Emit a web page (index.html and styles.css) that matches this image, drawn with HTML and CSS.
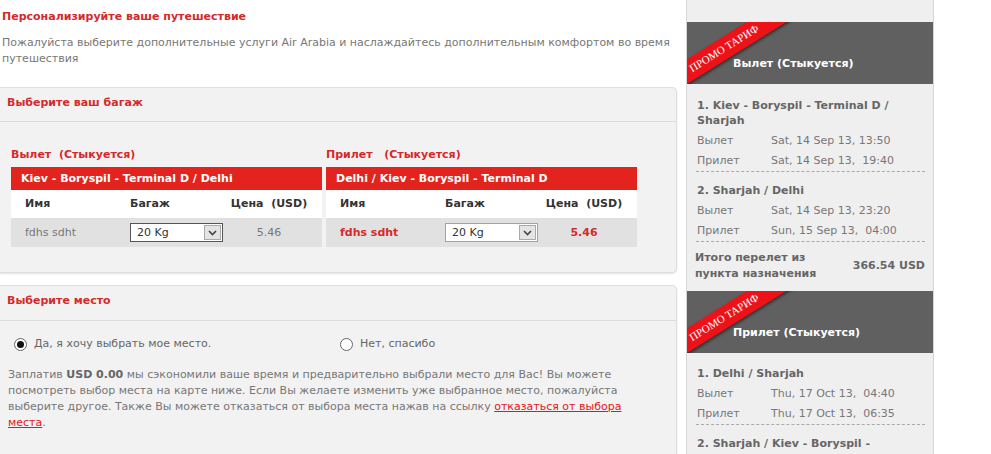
FILE: index.html
```html
<!DOCTYPE html>
<html lang="ru">
<head>
    <meta charset="utf-8">
    <title>Персонализируйте ваше путешествие</title>
    <link rel="stylesheet" href="styles.css">
</head>
<body>
<div class="page">
    <div class="main">
        <h2 class="title">Персонализируйте ваше путешествие</h2>
        <p class="intro">Пожалуйста выберите дополнительные услуги Air Arabia и наслаждайтесь дополнительным комфортом во время<br>путешествия</p>

        <!-- багаж -->
        <div class="panel">
            <div class="panel-head">Выберите ваш багаж</div>
            <div class="bag-body">
                <div class="legs">
                    <div class="leg">
                        <div class="leg-label">Вылет&nbsp; (Стыкуется)</div>
                        <div class="leg-route">Kiev - Boryspil - Terminal D / Delhi</div>
                        <div class="grid grid-head">
                            <span>Имя</span>
                            <span>Багаж</span>
                            <span class="price">Цена&nbsp; (USD)</span>
                        </div>
                        <div class="grid grid-row">
                            <span>fdhs sdht</span>
                            <span>
                                <span class="select">
                                    <span class="select-text">20 Kg</span>
                                    <span class="select-btn"><svg width="9" height="6" viewBox="0 0 9 6"><path d="M1 1 L4.5 4.5 L8 1" fill="none" stroke="#444" stroke-width="1.6"/></svg></span>
                                </span>
                            </span>
                            <span class="price">5.46</span>
                        </div>
                    </div>
                    <div class="leg">
                        <div class="leg-label">Прилет&nbsp;&nbsp; (Стыкуется)</div>
                        <div class="leg-route">Delhi / Kiev - Boryspil - Terminal D</div>
                        <div class="grid grid-head">
                            <span>Имя</span>
                            <span>Багаж</span>
                            <span class="price">Цена&nbsp; (USD)</span>
                        </div>
                        <div class="grid grid-row active">
                            <span>fdhs sdht</span>
                            <span>
                                <span class="select focus">
                                    <span class="select-text">20 Kg</span>
                                    <span class="select-btn"><svg width="9" height="6" viewBox="0 0 9 6"><path d="M1 1 L4.5 4.5 L8 1" fill="none" stroke="#444" stroke-width="1.6"/></svg></span>
                                </span>
                            </span>
                            <span class="price">5.46</span>
                        </div>
                    </div>
                </div>
            </div>
        </div>

        <!-- место -->
        <div class="panel panel-seat">
            <div class="panel-head">Выберите место</div>
            <div class="seat-body">
                <div class="radios">
                    <label class="option"><span class="radio checked"></span>Да, я хочу выбрать мое место.</label>
                    <label class="option"><span class="radio"></span>Нет, спасибо</label>
                </div>
                <p class="seat-text">Заплатив <b>USD 0.00</b> мы сэкономили ваше время и предварительно выбрали место для Вас! Вы можете<br>посмотреть выбор места на карте ниже. Если Вы желаете изменить уже выбранное место, пожалуйста<br>выберите другое. Также Вы можете отказаться от выбора места нажав на ссылку <a href="#">отказаться от выбора<br>места</a>.</p>
                <div class="seat-legs">
                    <span>Kiev - Boryspil / Sharjah</span>
                    <span>Sharjah / Delhi</span>
                </div>
            </div>
        </div>
    </div>

    <div class="side">
        <div class="side-top">
            <div class="row"><span class="row-label">Прилет</span><span>Thu, 12 Sep 13,&nbsp; 21:05</span></div>
        </div>

        <div class="side-head">
            <div class="ribbon">ПРОМО ТАРИФ</div>
            Вылет (Стыкуется)
        </div>
        <div class="seg seg-first">
            <div class="seg-title">1. Kiev - Boryspil - Terminal D / Sharjah</div>
            <div class="row"><span class="row-label">Вылет</span><span>Sat, 14 Sep 13, 13:50</span></div>
            <div class="row"><span class="row-label">Прилет</span><span>Sat, 14 Sep 13,&nbsp; 19:40</span></div>
        </div>
        <div class="seg">
            <div class="seg-title">2. Sharjah / Delhi</div>
            <div class="row"><span class="row-label">Вылет</span><span>Sat, 14 Sep 13, 23:20</span></div>
            <div class="row"><span class="row-label">Прилет</span><span>Sun, 15 Sep 13,&nbsp; 04:00</span></div>
        </div>
        <div class="total">
            <span>Итого перелет из<br>пункта назначения</span>
            <span>366.54 USD</span>
        </div>

        <div class="side-head">
            <div class="ribbon">ПРОМО ТАРИФ</div>
            Прилет (Стыкуется)
        </div>
        <div class="seg seg-second">
            <div class="seg-title">1. Delhi / Sharjah</div>
            <div class="row"><span class="row-label">Вылет</span><span>Thu, 17 Oct 13,&nbsp; 04:40</span></div>
            <div class="row"><span class="row-label">Прилет</span><span>Thu, 17 Oct 13,&nbsp; 06:35</span></div>
        </div>
        <div class="seg">
            <div class="seg-title">2. Sharjah / Kiev - Boryspil - Terminal D</div>
            <div class="row"><span class="row-label">Вылет</span><span>Thu, 17 Oct 13,&nbsp; 08:10</span></div>
        </div>
    </div>
</div>
</body>
</html>
```

FILE: styles.css
```css
body {
    margin: 0;
    font-family: "DejaVu Sans", Verdana, sans-serif;
    font-size: 11px;
    line-height: 16px;
    color: #777;
    background-color: #fff;
    overflow: hidden;
}

.page {
    display: flex;
    align-items: flex-start;
    gap: 9px;
}

.main {
    flex: none;
    width: 677px;
}

.title {
    margin: 9px 0 0 2px;
    font-size: 11px;
    line-height: 16px;
    color: #d52a2c;
}

.intro {
    margin: 10px 0 0 2px;
    color: #777;
}

.panel {
    margin-top: 20px;
    background-color: #f2f2f2;
    border: 1px solid #dedede;
    border-left: 0;
    border-radius: 0 5px 5px 0;
    box-shadow: 0 1px 2px rgba(0, 0, 0, 0.12);
}

.panel-seat {
    margin-top: 12px;
}

.panel-head {
    padding: 7px 7px 10px;
    border-bottom: 1px solid #dcdcdc;
    font-weight: bold;
    color: #d52a2c;
}

.panel-seat .panel-head {
    padding-bottom: 11px;
}

.bag-body {
    padding: 25px 11px 25px;
}

.legs {
    display: flex;
    gap: 4px;
}

.leg {
    width: 311px;
}

.leg-label {
    margin-bottom: 4px;
    font-weight: bold;
    color: #d52a2c;
}

.leg-route {
    padding-left: 10px;
    line-height: 23px;
    font-weight: bold;
    color: #fff;
    background-color: #e3231d;
}

.grid {
    display: grid;
    grid-template-columns: 105px 97px 84px;
    align-items: center;
    padding-left: 14px;
}

.grid-head {
    height: 28px;
    font-weight: bold;
    color: #333;
    background-color: #fff;
}

.grid-row {
    height: 29px;
    color: #777;
    background-color: #e1e1e1;
}

.grid-row.active {
    font-weight: bold;
    color: #d52a2c;
}

.price {
    text-align: center;
}

.select {
    display: flex;
    box-sizing: border-box;
    width: 93px;
    height: 19px;
    border: 1px solid #555;
    background-color: #fff;
    font-weight: normal;
}

.select.focus {
    border-color: #c9a13f;
}

.select-text {
    flex: 1;
    padding-left: 6px;
    line-height: 17px;
    color: #333;
}

.select-btn {
    display: flex;
    align-items: center;
    justify-content: center;
    width: 15px;
    margin: 1px;
    border: 1px solid #aaa;
    background-color: #e4e4e4;
}

.seat-body {
    padding: 15px 0 0 8px;
}

.radios {
    display: grid;
    grid-template-columns: 326px auto;
    padding-left: 6px;
    color: #666;
}

.option {
    display: flex;
    align-items: center;
    gap: 7px;
}

.radio {
    display: flex;
    align-items: center;
    justify-content: center;
    box-sizing: border-box;
    width: 13px;
    height: 13px;
    border: 1px solid #666;
    border-radius: 50%;
    background-color: #fff;
}

.radio.checked::after {
    content: "";
    width: 7px;
    height: 7px;
    border-radius: 50%;
    background-color: #111;
}

.seat-text {
    margin: 15px 0 0;
    color: #777;
}

.seat-text b {
    color: #666;
}

.seat-text a {
    color: #e2161c;
}

.seat-legs {
    display: flex;
    gap: 120px;
    margin-top: 33px;
    padding-left: 3px;
    font-weight: bold;
    color: #d52a2c;
}

/* боковая колонка */
.side {
    flex: none;
    width: 246px;
    background-color: #efefef;
    border-left: 1px solid #d6d6d6;
    border-right: 1px solid #d6d6d6;
}

.side-top {
    height: 22px;
    overflow: hidden;
    padding-left: 10px;
}

.side-top .row {
    margin-top: -18px;
}

.side-head {
    position: relative;
    overflow: hidden;
    box-sizing: border-box;
    height: 62px;
    padding: 34px 0 0 46px;
    font-weight: bold;
    color: #fff;
    background-color: #606060;
}

.ribbon {
    position: absolute;
    left: -53px;
    top: 16px;
    width: 180px;
    height: 21px;
    transform: rotate(-32deg);
    font-family: "Liberation Serif", "Times New Roman", serif;
    font-size: 11px;
    font-weight: normal;
    line-height: 21px;
    text-align: center;
    color: #fff;
    background-color: #ec1218;
    box-shadow: 0 2px 3px rgba(0, 0, 0, 0.5);
}

.seg {
    margin: 0 8px 0 9px;
    padding: 11px 0 0 1px;
    border-bottom: 1px dashed #aaa;
}

.seg-first {
    padding-top: 14px;
}

.seg-second {
    padding-top: 13px;
}

.seg-title {
    margin-bottom: 3px;
    padding-right: 10px;
    line-height: 15px;
    font-weight: bold;
    color: #666;
}

.row {
    display: flex;
    line-height: 20px;
    color: #777;
}

.row-label {
    width: 74px;
}

.total {
    display: flex;
    align-items: center;
    justify-content: space-between;
    padding: 8px 8px 9px;
    font-weight: bold;
    color: #666;
}
```
